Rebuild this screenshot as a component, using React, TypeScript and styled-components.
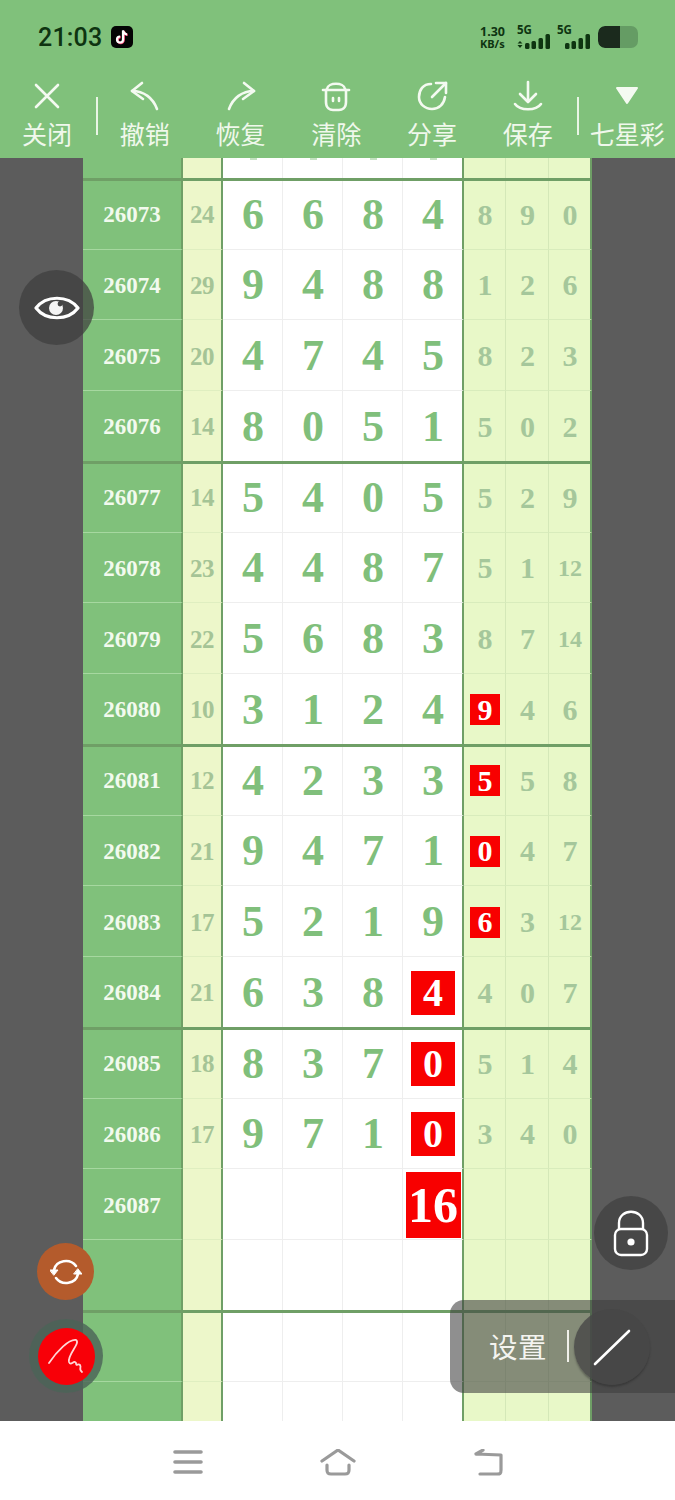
import React from 'react';
import styled, { createGlobalStyle } from 'styled-components';

const Global = createGlobalStyle`
  html, body { margin: 0; padding: 0; background: #fff; }
  * { box-sizing: border-box; }
`;

const CJK = `"Noto Sans CJK SC", "Noto Sans", sans-serif`;
const SERIF = `"Liberation Serif", "Times New Roman", serif`;
const GREEN = '#80c17b';
const LINE = '#6f9f66';

const Phone = styled.div`
  position: relative; width: 675px; height: 1500px; overflow: hidden;
  display: flex; flex-direction: column; background: #fff;
`;

const StatusBar = styled.div`
  height: 72px; background: ${GREEN}; display: flex; align-items: center;
  padding: 2px 37px 0 38px; color: #0e3411; flex: none;
`;
const Time = styled.span`
  font: 500 25px/1 Roboto, sans-serif; letter-spacing: .2px;
`;
const TikTok = styled.span`
  display: flex; align-items: center; justify-content: center;
  margin-left: 9px; width: 22px; height: 22px; border-radius: 5px; background: #050505;
`;
const StatusRight = styled.div`
  margin-left: auto; display: flex; align-items: center;
`;
const Speed = styled.div`
  display: flex; flex-direction: column; align-items: flex-start;
  font: 700 12.5px/12px "Noto Sans", sans-serif; color: #0e3411; width: 37px;
  span:last-child { font-size: 11px; line-height: 11px; }
`;
const Signal = styled.div`
  position: relative; width: 40px; height: 24px;
  span { position: absolute; left: 0; top: -1px; font: 700 11.5px/12px "Noto Sans", sans-serif; }
  svg { position: absolute; left: 0; bottom: 0; }
`;
const Battery = styled.div`
  width: 40px; height: 22px; border-radius: 7px; background: #659c64; overflow: hidden; margin-left: 1px;
  i { display: block; width: 22px; height: 100%; background: #1b2a1d; border-radius: 7px 0 0 7px; }
`;

const Toolbar = styled.div`
  height: 86px; background: ${GREEN}; display: flex; flex: none;
`;
const Tool = styled.div<{ $w: number }>`
  width: ${p => p.$w}px; display: flex; flex-direction: column; align-items: center;
  color: #f4faf1; height: 86px; padding-top: 8px; flex: none;
  svg { display: block; height: 32px; width: 32px; flex: none; }
`;
const ToolLabel = styled.span`
  font: 400 25px/30px ${CJK}; white-space: nowrap; margin-top: 6px; color: #f0f8ec;
`;
const ToolSep = styled.div<{ $l: number; $r: number }>`
  width: 2px; height: 38px; background: #e9f5e5; margin: 25px ${p => p.$r}px 0 ${p => p.$l}px; flex: none;
`;

const Board = styled.div`
  flex: 1; display: flex; min-height: 0; background: #5c5c5c;
`;
const Table = styled.div`
  width: 509px; margin-left: 83px; overflow: hidden; background: #fff;
`;
const COLS = '100px 40px 60px 60px 60px 61px 42px 43px 43px';
const Row = styled.div<{ $heavy?: boolean }>`
  height: 70.75px; display: grid;
  grid-template-columns: ${COLS};
  position: relative;
  ${p => p.$heavy ? `&::before { content: ''; position: absolute; left: 0; right: 0; top: -1px; height: 3px; background: ${LINE}; z-index: 1; }` : ''}
`;
const TopRow = styled(Row)`
  height: 20.75px;
`;
const IdCell = styled.div`
  background: ${GREEN}; border-right: 2px solid ${LINE}; border-bottom: 1px solid #a6d8a0;
  display: flex; align-items: center; justify-content: center; padding-top: 2px;
  font: 700 23px/1 ${SERIF}; color: #f2faee;
`;
const SumCell = styled.div`
  background: #edf7ca; border-right: 2px solid ${LINE}; border-bottom: 1px solid #dfeec0;
  display: flex; align-items: center; justify-content: center; padding-top: 2px;
  font: 700 25px/1 ${SERIF}; color: #a5c496; letter-spacing: -.5px;
`;
const MainCell = styled.div<{ $end?: boolean }>`
  background: #fff; border-right: ${p => p.$end ? `2px solid ${LINE}` : '1px solid #eeeeee'};
  border-bottom: 1px solid #eeeeee;
  display: flex; align-items: center; justify-content: center; padding: 2px 0 0 1px;
  font: 700 44px/1 ${SERIF}; color: #80bf7b;
`;
const TipCell = styled(MainCell)`
  align-items: flex-start; padding: 0 0 0 1px; border-bottom: none;
`;
const Tip = styled.span`
  width: 7px; height: 2px; background: #c4e2c1;
`;
const TailCell = styled.div<{ $end?: boolean }>`
  background: #e8f8c8; border-right: ${p => p.$end ? `2px solid ${LINE}` : '1px solid #d4e8b8'};
  border-bottom: 1px solid #d8ecbc;
  display: flex; align-items: center; justify-content: center; padding: 2px 0 0 1px;
  font: 700 30px/1 ${SERIF}; color: #a5c79b;
`;
const TailSmall = styled.span`
  font-size: 24px;
`;
const MainHit = styled.span<{ $big?: boolean }>`
  background: #f80000; color: #fff; display: flex; align-items: center; justify-content: center;
  width: ${p => p.$big ? 55 : 44}px; height: ${p => p.$big ? 66 : 44}px;
  font-size: ${p => p.$big ? 50 : 40}px;
`;
const TailHit = styled.span`
  background: #f80000; color: #fff; display: flex; align-items: center; justify-content: center;
  width: 30px; height: 31px; font-size: 30px;
`;

const Nav = styled.div`
  height: 79px; background: #fff; flex: none; display: flex; padding: 28px 0 0 172px;
`;
const NavIcon = styled.svg<{ $left: number; $w: number }>`
  display: block; width: ${p => p.$w}px; height: 28px; margin-left: ${p => p.$left}px; flex: none;
`;

const Float = styled.div<{ $x: number; $y: number; $d: number; $bg: string; $raised?: boolean }>`
  position: absolute; left: ${p => p.$x}px; top: ${p => p.$y}px; width: ${p => p.$d}px; height: ${p => p.$d}px;
  border-radius: 50%; background: ${p => p.$bg}; display: flex; align-items: center; justify-content: center;
  z-index: 5; ${p => p.$raised ? 'box-shadow: 0 2px 2px rgba(30,30,30,.35);' : ''}
`;
const PenInner = styled.div`
  width: 57px; height: 57px; border-radius: 50%; background: #f80008;
  display: flex; align-items: center; justify-content: center;
`;
const SettingsPill = styled.div`
  position: absolute; left: 450px; top: 1300px; width: 225px; height: 93px; z-index: 4;
  border-radius: 14px 0 0 14px; background: rgba(62, 62, 62, .58);
  display: flex; align-items: center; padding-left: 39px; padding-bottom: 1px;
`;
const SettingsText = styled.span`
  font: 400 28.5px/1 ${CJK}; color: #f4f4f0; letter-spacing: .4px;
`;
const SettingsSep = styled.span`
  width: 2px; height: 32px; background: #f0f0ea; margin-left: 20px;
`;

type R = { id?: string; sum?: string; d?: string[]; t?: string[]; hitM?: number; hitT?: number; big?: boolean; heavy?: boolean };
const rows: R[] = [
  { id: '26073', sum: '24', d: ['6', '6', '8', '4'], t: ['8', '9', '0'], heavy: true },
  { id: '26074', sum: '29', d: ['9', '4', '8', '8'], t: ['1', '2', '6'] },
  { id: '26075', sum: '20', d: ['4', '7', '4', '5'], t: ['8', '2', '3'] },
  { id: '26076', sum: '14', d: ['8', '0', '5', '1'], t: ['5', '0', '2'] },
  { id: '26077', sum: '14', d: ['5', '4', '0', '5'], t: ['5', '2', '9'], heavy: true },
  { id: '26078', sum: '23', d: ['4', '4', '8', '7'], t: ['5', '1', '12'] },
  { id: '26079', sum: '22', d: ['5', '6', '8', '3'], t: ['8', '7', '14'] },
  { id: '26080', sum: '10', d: ['3', '1', '2', '4'], t: ['9', '4', '6'], hitT: 0 },
  { id: '26081', sum: '12', d: ['4', '2', '3', '3'], t: ['5', '5', '8'], hitT: 0, heavy: true },
  { id: '26082', sum: '21', d: ['9', '4', '7', '1'], t: ['0', '4', '7'], hitT: 0 },
  { id: '26083', sum: '17', d: ['5', '2', '1', '9'], t: ['6', '3', '12'], hitT: 0 },
  { id: '26084', sum: '21', d: ['6', '3', '8', '4'], t: ['4', '0', '7'], hitM: 3 },
  { id: '26085', sum: '18', d: ['8', '3', '7', '0'], t: ['5', '1', '4'], hitM: 3, heavy: true },
  { id: '26086', sum: '17', d: ['9', '7', '1', '0'], t: ['3', '4', '0'], hitM: 3 },
  { id: '26087', d: ['', '', '', '16'], t: ['', '', ''], hitM: 3, big: true },
  {},
  { heavy: true },
  {},
];

const tools = [
  { label: '关闭', icon: <path d="M5 5 L27 27 M27 5 L5 27" /> },
  { label: '撤销', icon: <><path d="M13 3 L3 11 L14 19" /><path d="M3 11 C15 11 24 18 28 29" /></> },
  { label: '恢复', icon: <><path d="M19 3 L29 11 L18 19" /><path d="M29 11 C17 11 8 18 4 29" /></> },
  { label: '清除', icon: <><path d="M7 9 C8 2 24 2 25 9" /><path d="M3 10 H29" /><path d="M6 10 V22 C6 28 10 30 13 30 H19 C22 30 26 28 26 22 V10" /><path d="M13 18 V21 M19 18 V21" /></> },
  { label: '分享', icon: <><path d="M15 4 C7 4 3 10 3 17 C3 24 9 29 16 29 C23 29 28 24 29 17" /><path d="M20 3 L30 3 L30 13" /><path d="M30 3 L16 17" /></> },
  { label: '保存', icon: <><path d="M16 2 L16 21" /><path d="M8 14 L16 22 L24 14" /><path d="M3 24 C8 31 24 31 29 24" /></> },
];

export default function App() {
  return (
    <Phone>
      <Global />
      <StatusBar>
        <Time>21:03</Time>
        <TikTok>
          <svg width="14" height="16" viewBox="0 0 14 16" fill="none">
            <path d="M8 1.5 V10.5 A3 3 0 1 1 5 7.5" stroke="#ff4d7d" strokeWidth="2.4" transform="translate(.7 .5)" />
            <path d="M8 1.5 C8.4 4 10 5.2 12 5.4" stroke="#ff4d7d" strokeWidth="2.2" transform="translate(.7 .5)" />
            <path d="M8 1.5 V10.5 A3 3 0 1 1 5 7.5" stroke="#fff" strokeWidth="2.2" />
            <path d="M8 1.5 C8.4 4 10 5.2 12 5.4" stroke="#fff" strokeWidth="2" />
          </svg>
        </TikTok>
        <StatusRight>
          <Speed><span>1.30</span><span>KB/s</span></Speed>
          <Signal>
            <span>5G</span>
            <svg width="34" height="15" viewBox="0 0 34 15" fill="#0e3411">
              <path d="M3 7 L5.5 9.5 H.5 Z M3 14 L5.5 11 H.5 Z" />
              <rect x="8" y="9" width="4.5" height="6" rx="1.5" /><rect x="14.5" y="7" width="4.5" height="8" rx="1.5" />
              <rect x="21.5" y="4" width="4.5" height="11" rx="1.5" /><rect x="28.5" y="0" width="4.5" height="15" rx="1.5" />
            </svg>
          </Signal>
          <Signal>
            <span>5G</span>
            <svg width="34" height="15" viewBox="0 0 34 15" fill="#0e3411">
              <rect x="8" y="9" width="4.5" height="6" rx="1.5" /><rect x="14.5" y="7" width="4.5" height="8" rx="1.5" />
              <rect x="21.5" y="4" width="4.5" height="11" rx="1.5" /><rect x="28.5" y="0" width="4.5" height="15" rx="1.5" />
            </svg>
          </Signal>
          <Battery><i /></Battery>
        </StatusRight>
      </StatusBar>
      <Toolbar>
        {tools.map((t, i) => (
          <React.Fragment key={t.label}>
            <Tool $w={i === 0 ? 94 : 95.75}>
              <svg viewBox="0 0 32 32" fill="none" stroke="currentColor" strokeWidth="2.6" strokeLinecap="round" strokeLinejoin="round">{t.icon}</svg>
              <ToolLabel>{t.label}</ToolLabel>
            </Tool>
            {i === 0 && <ToolSep $l={2} $r={-1} />}
          </React.Fragment>
        ))}
        <ToolSep $l={1} $r={1} />
        <Tool $w={95}>
          <svg viewBox="0 0 32 32"><path d="M6 8 H26 L16 23 Z" fill="currentColor" stroke="currentColor" strokeWidth="2" strokeLinejoin="round" /></svg>
          <ToolLabel>七星彩</ToolLabel>
        </Tool>
      </Toolbar>
      <Board>
        <Table>
          <TopRow>
            <IdCell />
            <SumCell />
            {[0, 1, 2, 3].map(c => <TipCell key={c} $end={c === 3}><Tip /></TipCell>)}
            {[0, 1, 2].map(c => <TailCell key={c} $end={c === 2} />)}
          </TopRow>
          {rows.map((r, i) => (
            <Row key={i} $heavy={r.heavy}>
              <IdCell>{r.id}</IdCell>
              <SumCell>{r.sum}</SumCell>
              {[0, 1, 2, 3].map(c => (
                <MainCell key={c} $end={c === 3}>
                  {r.hitM === c && r.d ? <MainHit $big={r.big}>{r.d[c]}</MainHit> : r.d?.[c]}
                </MainCell>
              ))}
              {[0, 1, 2].map(c => {
                const v = r.t?.[c] ?? '';
                return (
                  <TailCell key={c} $end={c === 2}>
                    {r.hitT === c ? <TailHit>{v}</TailHit> : v.length > 1 ? <TailSmall>{v}</TailSmall> : v}
                  </TailCell>
                );
              })}
            </Row>
          ))}
        </Table>
      </Board>
      <Nav>
        <NavIcon $left={0} $w={32} viewBox="0 0 32 28" fill="none" stroke="#9a9a9a" strokeWidth="3.6" strokeLinecap="round">
          <path d="M3 3 H29 M3 13 H29 M3 23 H29" />
        </NavIcon>
        <NavIcon $left={116} $w={36} viewBox="0 0 36 28" fill="none" stroke="#9a9a9a" strokeWidth="3.2" strokeLinecap="round" strokeLinejoin="round">
          <path d="M2 12 L18 1 L34 12" /><path d="M7 16 V21 C7 24 8 25 11 25 H25 C28 25 29 24 29 21 V16" />
        </NavIcon>
        <NavIcon $left={116} $w={32} viewBox="0 0 32 28" fill="none" stroke="#9a9a9a" strokeWidth="3.2" strokeLinecap="round" strokeLinejoin="round">
          <path d="M4 5 L11 1 M4 5 L29 6 V21 C29 25 28 25 25 25 H8" />
        </NavIcon>
      </Nav>

      <Float $x={19} $y={270} $d={75} $bg="rgba(62,62,62,.72)">
        <svg width="46" height="32" viewBox="0 0 46 32" fill="none">
          <path d="M2 16 C12 3 34 3 44 16 C34 29 12 29 2 16 Z" stroke="#fff" strokeWidth="3.2" strokeLinejoin="round" />
          <circle cx="22" cy="16" r="7" fill="#f4f4f4" /><circle cx="26" cy="12" r="2.4" fill="#444" />
        </svg>
      </Float>
      <Float $x={594} $y={1196} $d={74} $bg="rgba(62,62,62,.68)">
        <svg width="36" height="48" viewBox="0 0 36 48" fill="none" stroke="#fff" strokeWidth="2.4">
          <path d="M6 21 V14 C6 -1 30 -1 30 14 V21" />
          <rect x="2" y="20" width="32" height="26" rx="6" />
          <circle cx="18" cy="33" r="3.6" fill="#fff" stroke="none" />
        </svg>
      </Float>
      <Float $x={37} $y={1243} $d={57} $bg="#b45b2c">
        <svg width="32" height="28" viewBox="0 0 32 28" fill="none" stroke="#fff" strokeWidth="2.6" strokeLinecap="round">
          <path d="M4 12 C6 2 20 0 26 8" /><path d="M28 16 C26 26 12 28 6 20" />
          <path d="M0 12 H8 L4 17 Z" fill="#fff" strokeWidth="1" /><path d="M24 16 H32 L28 11 Z" fill="#fff" strokeWidth="1" />
        </svg>
      </Float>
      <Float $x={29} $y={1319} $d={74} $bg="rgba(76,100,88,.82)">
        <PenInner>
          <svg width="38" height="38" viewBox="0 0 38 38" fill="none" stroke="#ffd6d6" strokeWidth="1.8" strokeLinecap="round" strokeLinejoin="round">
            <path d="M2 26 C10 14 22 2 29 3 C34 6 20 18 22 25 C24 30 27 22 29 26 C29 30 31 26 33 28 C35 31 31 32 35 35" />
          </svg>
        </PenInner>
      </Float>
      <SettingsPill>
        <SettingsText>设置</SettingsText>
        <SettingsSep />
      </SettingsPill>
      <Float $x={574} $y={1309} $d={76} $bg="rgba(70,70,70,.8)" $raised>
        <svg width="38" height="38" viewBox="0 0 38 38" stroke="#fff" strokeWidth="2.6" strokeLinecap="round"><path d="M2 36 L36 3" /></svg>
      </Float>
    </Phone>
  );
}
